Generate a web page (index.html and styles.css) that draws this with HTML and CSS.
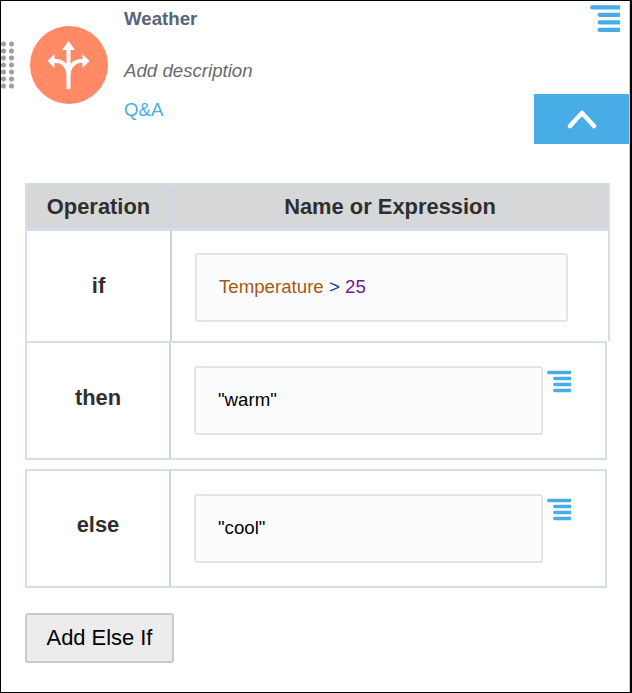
FILE: index.html
```html
<!DOCTYPE html>
<html lang="en">
<head>
    <meta charset="UTF-8">
    <title>Weather</title>
    <link rel="stylesheet" href="styles.css">
</head>
<body>
    <div class="frame">
        <div class="drag-handle"></div>
        <svg class="menu-icon menu-top" viewBox="0 0 28 26"><path d="M2 3H27M9 10H27M9 17H27M9 24H27"/></svg>
        <button class="collapse">
            <svg viewBox="0 0 30 20"><path d="M3 17L15 4L27 17"/></svg>
        </button>

        <div class="header">
            <div class="avatar">
                <svg viewBox="0 0 78 78">
                    <path class="stroke" d="M38.500 63V22M38.500 50C38.500 41 33 35 26 35H22M38.500 50C38.500 41 44 35 51 35H55"/>
                    <path class="fill" d="M38.500 15L45 24H32ZM17.500 35L24.500 28V42ZM59.500 35L52.500 28V42Z"/>
                </svg>
            </div>
            <div class="info">
                <div class="title">Weather</div>
                <div class="desc">Add description</div>
                <a class="qa">Q&amp;A</a>
            </div>
        </div>

        <div class="expr-table">
            <div class="row head-row">
                <div class="op">Operation</div>
                <div class="name">Name or Expression</div>
            </div>
            <div class="row if-row">
                <div class="op">if</div>
                <div class="value"><div class="field field-if"><span class="tok-name">Temperature</span> <span class="tok-op">&gt;</span> <span class="tok-num">25</span></div></div>
            </div>
            <div class="row then-row">
                <div class="op">then</div>
                <div class="value"><div class="field">"warm"</div>
                    <svg class="menu-icon" viewBox="0 0 28 26"><path d="M2 3H27M9 10H27M9 17H27M9 24H27"/></svg>
                </div>
            </div>
            <div class="row else-row">
                <div class="op">else</div>
                <div class="value"><div class="field">"cool"</div>
                    <svg class="menu-icon" viewBox="0 0 28 26"><path d="M2 3H27M9 10H27M9 17H27M9 24H27"/></svg>
                </div>
            </div>
        </div>

        <button class="add-btn">Add Else If</button>
    </div>
</body>
</html>
```

FILE: styles.css
```css
html, body {
    margin: 0;
    padding: 0;
    background: #fff;
}
.frame {
    position: relative;
    box-sizing: border-box;
    width: 632px;
    height: 693px;
    padding-left: 24px;
    border: solid #000;
    border-width: 1px 0 1px 1px;
    font-family: "Liberation Sans", Arial, sans-serif;
    overflow: hidden;
}
.frame::after {
    content: "";
    position: absolute;
    top: 0;
    bottom: 0;
    right: 0;
    width: 2px;
    background: #000;
    border-left: 1px solid #ccc;
}
.drag-handle {
    position: absolute;
    left: 0;
    top: 40px;
    width: 15px;
    height: 49px;
    background-image: radial-gradient(circle at 2.500px 3px, #a0a0a0 2.200px, transparent 2.900px), radial-gradient(circle at 10.500px 3px, #a0a0a0 2.200px, transparent 2.900px);
    background-size: 15px 7px;
}
.menu-icon {
    width: 24px;
    height: 24px;
    flex: none;
}
.menu-icon path {
    fill: none;
    stroke: #48ade6;
    stroke-width: 4;
    stroke-linecap: round;
}
.menu-top {
    position: absolute;
    top: 3px;
    right: 12px;
    width: 30px;
    height: 28px;
}
.collapse {
    position: absolute;
    top: 93px;
    right: 2px;
    width: 96px;
    height: 50px;
    padding: 0;
    border: none;
    background: #48ade6;
}
.collapse svg {
    display: block;
    width: 30px;
    height: 20px;
    margin: 0 auto;
}
.collapse path {
    fill: none;
    stroke: #fff;
    stroke-width: 4.500;
    stroke-linecap: round;
    stroke-linejoin: round;
}
.header {
    display: flex;
    height: 182px;
    padding-left: 5px;
}
.avatar {
    width: 78px;
    height: 78px;
    margin-top: 25px;
    border-radius: 50%;
    background: #ff8a65;
}
.avatar svg {
    display: block;
}
.avatar .stroke {
    fill: none;
    stroke: #fff;
    stroke-width: 4;
}
.avatar .fill {
    fill: #fff;
}
.info {
    margin-left: 16px;
    padding-top: 7px;
    font-size: 14pt;
}
.title {
    font-weight: bold;
    color: #5a6478;
    line-height: 21px;
}
.desc {
    margin-top: 31px;
    font-style: italic;
    color: #6b6b6b;
    line-height: 21px;
}
.qa {
    display: block;
    margin-top: 18px;
    color: #48ade6;
    line-height: 21px;
}
.expr-table {
    width: 585px;
}
.row {
    display: flex;
    box-sizing: border-box;
    border: 2px solid #d5dde9;
    border-top: none;
    color: #2f2f2f;
    font-size: 21.900px;
    font-weight: bold;
}
.op {
    box-sizing: border-box;
    display: flex;
    align-items: center;
    justify-content: center;
    width: 145px;
    border-right: 2px solid #c9d3df;
    flex: none;
}
.head-row {
    height: 48px;
    background: #d5d7d9;
    border-top: 2px solid #d5dde9;
    border-bottom-width: 3px;
}
.head-row .op {
    border-right-color: #ccd6e2;
}
.name {
    flex: 1;
    display: flex;
    align-items: center;
    justify-content: center;
}
.if-row {
    height: 110px;
    border-bottom: none;
}
.then-row,
.else-row {
    width: 582px;
    height: 119px;
    border-top: 2px solid #d5dde9;
    border-bottom-width: 2px;
}
.else-row {
    margin-top: 9px;
}
.then-row .op,
.else-row .op {
    width: 144px;
    padding-bottom: 6px;
}
.else-row .op {
    padding-bottom: 8px;
}
.value {
    display: flex;
    align-items: flex-start;
    flex: 1;
    padding: 23px 0 0 23px;
    gap: 4px;
}
.if-row .value {
    padding-top: 22px;
}
.field {
    box-sizing: border-box;
    width: 349px;
    height: 69px;
    padding-left: 22px;
    line-height: 63px;
    border: 2px solid #e0e5e8;
    border-radius: 3px;
    background: #fbfcfe;
    color: #000;
    font-size: 14pt;
    font-weight: normal;
}
.field-if {
    width: 373px;
}
.tok-name { color: #a9590f; }
.tok-op { color: #1b2f9e; }
.tok-num { color: #7a0f9e; }
.value .menu-icon {
    margin-top: 3px;
}
.add-btn {
    display: block;
    width: 149px;
    height: 50px;
    margin-top: 25px;
    padding: 0;
    border: 2px solid #cacaca;
    border-radius: 3px;
    background: #ececec;
    color: #000;
    font-family: inherit;
    font-size: 21.900px;
}
```
